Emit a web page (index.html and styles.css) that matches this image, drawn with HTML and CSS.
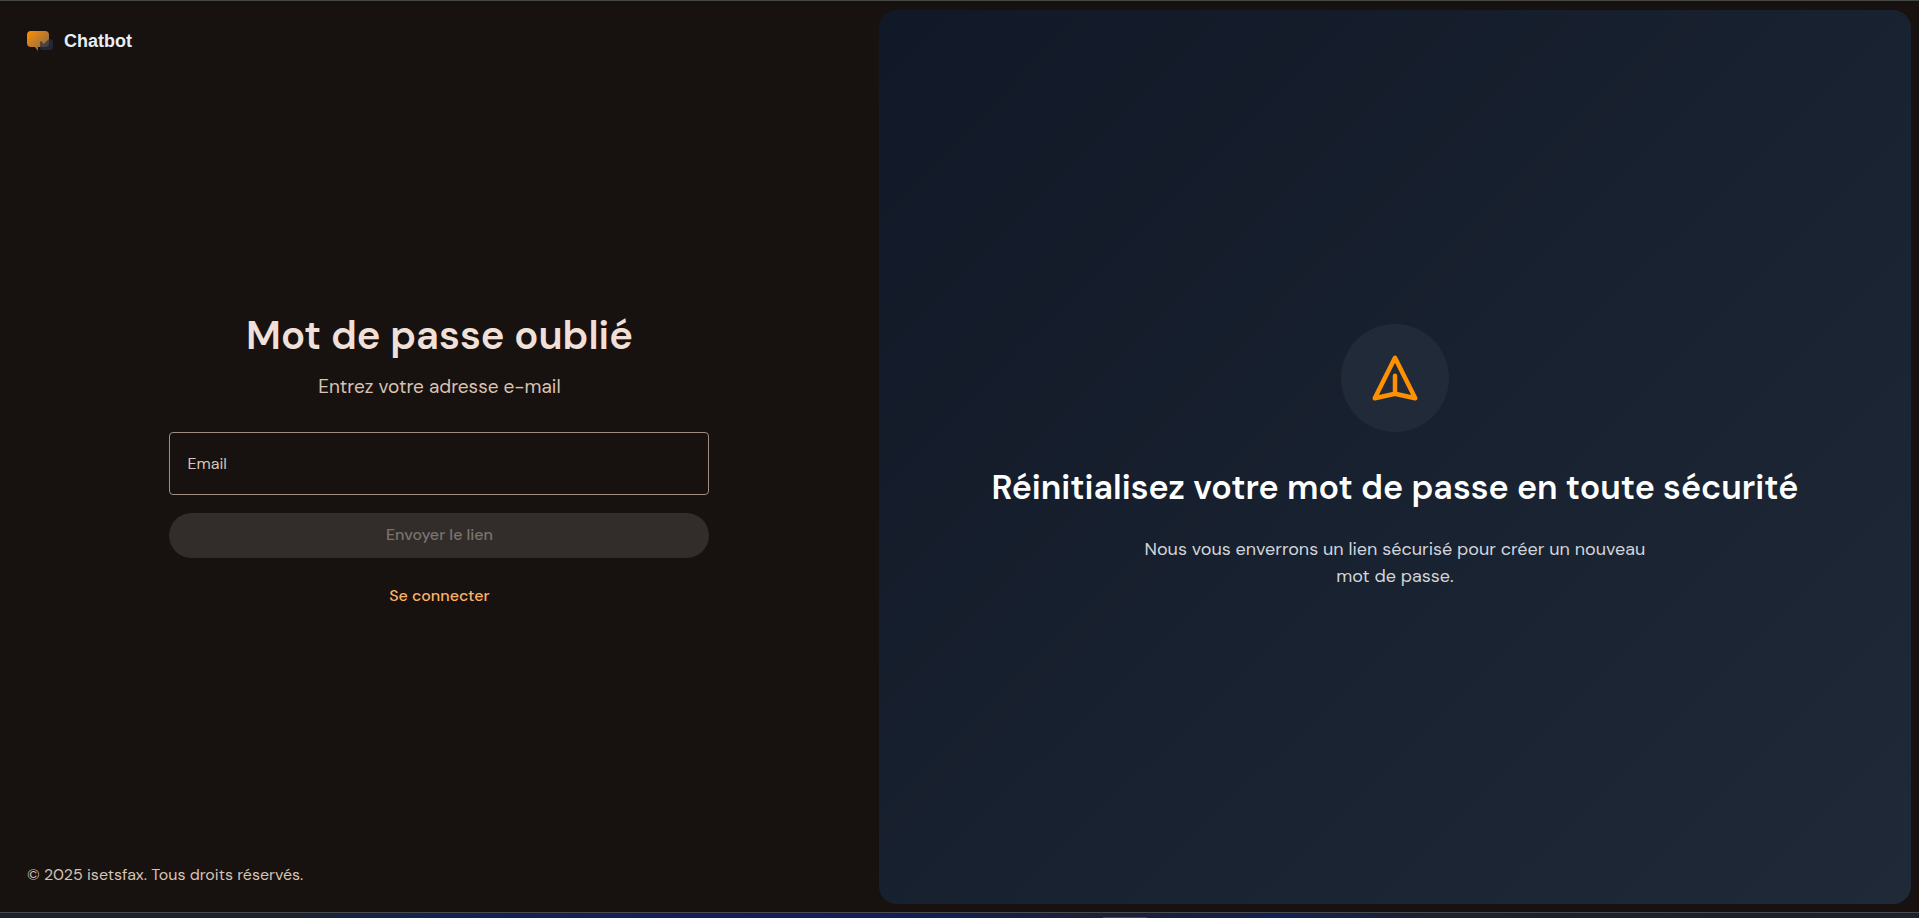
FILE: index.html
```html
<!DOCTYPE html>
<html lang="fr">
<head>
<meta charset="utf-8">
<meta name="viewport" content="width=device-width, initial-scale=1">
<title>Mot de passe oublié</title>
<link rel="stylesheet" href="styles.css">
</head>
<body>
<div class="page">
  <section class="auth">
    <header class="brand">
      <svg class="brand-icon" viewBox="0 0 26 20" aria-hidden="true">
        <defs>
          <linearGradient id="bubble" x1="0" y1="0" x2="1" y2="1">
            <stop offset="0" stop-color="#ff9100"/>
            <stop offset="1" stop-color="#7c6455"/>
          </linearGradient>
        </defs>
        <path d="M4 0h14a4 4 0 0 1 4 4v8a4 4 0 0 1-4 4h-7v4l-3-4H4a4 4 0 0 1-4-4V4a4 4 0 0 1 4-4z" fill="url(#bubble)"/>
        <path d="M13 10.500h2l1.500 2.500 5.500-5h1a3 3 0 0 1 3 3v5a3 3 0 0 1-3 3h-8a2 2 0 0 1-2-2z" fill="#263144" fill-opacity=".7"/>
      </svg>
      <span>Chatbot</span>
    </header>
    <main class="form-area">
      <form class="form">
        <h1 class="title">Mot de passe oublié</h1>
        <p class="subtitle">Entrez votre adresse e-mail</p>
        <input class="field" type="email" placeholder="Email" aria-label="Email">
        <button class="submit" type="submit" disabled>Envoyer le lien</button>
        <a class="login" href="#">Se connecter</a>
      </form>
    </main>
    <footer class="legal">© 2025 isetsfax. Tous droits réservés.</footer>
  </section>
  <aside class="promo">
    <div class="badge">
      <svg class="badge-icon" viewBox="0 0 24 24" fill="none" stroke="#ff9100" stroke-width="2" stroke-linecap="round" stroke-linejoin="round" aria-hidden="true">
        <path d="M12 19l9 2-9-18-9 18 9-2zm0 0v-8"/>
      </svg>
    </div>
    <h2 class="promo-title">Réinitialisez votre mot de passe en toute sécurité</h2>
    <p class="promo-text">Nous vous enverrons un lien sécurisé pour créer un nouveau mot de passe.</p>
  </aside>
</div>
<div class="taskbar"><span class="taskbar-mark"></span></div>
</body>
</html>
```
FILE: styles.css
```css
* { box-sizing: border-box; }

body {
  margin: 0;
  height: 100vh;
  display: flex;
  flex-direction: column;
  overflow: hidden;
  background: #17120f;
  color: #d8c3b5;
  font-family: "DM Sans", Inter, "Noto Sans", sans-serif;
  font-size: 16px;
  line-height: 24px;
}

.page {
  flex: 1;
  display: flex;
  border-top: 1px solid #454744;
}

.auth {
  width: 45.8%;
  display: flex;
  flex-direction: column;
  padding: 28px 27px 25px;
}

.brand {
  display: flex;
  align-items: center;
  gap: 11px;
  color: #e8eef8;
  font-family: "Liberation Sans", Arial, sans-serif;
  font-size: 18px;
  font-weight: 700;
}

.brand-icon { width: 26px; height: 20px; }

.form-area {
  flex: 1;
  display: flex;
  align-items: center;
  justify-content: center;
}

.form {
  width: 100%;
  max-width: 540px;
  display: flex;
  flex-direction: column;
  text-align: center;
}

.title {
  margin: 0;
  color: #f0e0d9;
  font-size: 40px;
  font-weight: 600;
  line-height: 52px;
}

.subtitle {
  margin: 14px 0 33px;
  font-size: 19px;
}

.field {
  width: 100%;
  height: 63px;
  padding: 0 17px;
  border: 1px solid #9f8d80;
  border-radius: 4px;
  background: transparent;
  color: #ece0d9;
  font: inherit;
}

.field::placeholder { color: #d8c3b5; opacity: 1; }

.submit {
  height: 45px;
  margin-top: 18px;
  border: 0;
  border-radius: 23px;
  background: #322d2a;
  color: #7b736e;
  font: inherit;
  font-weight: 500;
}

.login {
  align-self: center;
  margin-top: 26px;
  color: #ffb265;
  font-weight: 500;
  text-decoration: none;
}

.promo {
  flex: 1;
  display: flex;
  flex-direction: column;
  align-items: center;
  justify-content: center;
  margin: 9px 8px 8px 0;
  padding: 0 36px;
  border-radius: 18px;
  background: linear-gradient(135deg, #111827, #18212f 50%, #1f2937);
  text-align: center;
}

.badge {
  display: grid;
  place-items: center;
  width: 108px;
  height: 108px;
  border-radius: 50%;
  background: #212a38;
}

.badge-icon { width: 54px; height: 54px; }

.promo-title {
  margin: 36px 0 28px;
  color: #fff;
  font-size: 34px;
  font-weight: 600;
  line-height: 40px;
}

.promo-text {
  max-width: 504px;
  margin: 0;
  color: #d1d5db;
  font-size: 18px;
  line-height: 27px;
}

.taskbar {
  display: flex;
  align-items: flex-end;
  height: 6px;
  padding-left: 57.5%;
  border-top: 1px solid #4a4a51;
  background: linear-gradient(90deg, #1c222b 0, #1b222d 15%, #13234b 21%, #161c5c 43%, #11204f 49%, #1d1f34 57%, #11204f 67%, #1c2030 74%, #1e202a 100%);
}

.taskbar-mark { width: 44px; height: 1px; background: #45434f; }
```
